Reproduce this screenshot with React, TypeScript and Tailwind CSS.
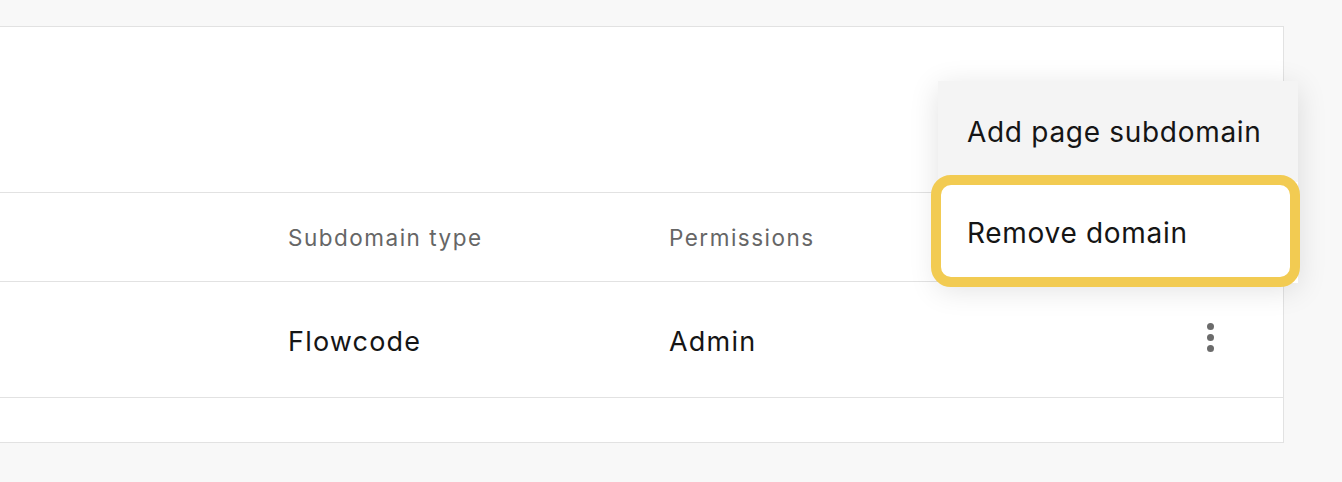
export default function App() {
  return (
    <div
      className="relative min-h-screen bg-[#f8f8f8] pt-[26px] pr-[58px] font-['Inter',sans-serif]"
      style={{ height: 482 }}
    >
      <div className="-ml-px border border-[#e2e2e2] bg-white">
        <div className="h-[166px] border-b border-[#e2e2e2]" />
        <div className="flex h-[89px] items-center border-b border-[#e2e2e2] pt-[2px] text-[22.5px] tracking-[1.5px] text-[#666]">
          <div className="w-[288px]" />
          <div className="w-[381px]">Subdomain type</div>
          <div>Permissions</div>
        </div>
        <div className="flex h-[116px] items-center border-b border-[#e2e2e2] pt-[6px] text-[27px] tracking-[1.2px] text-[#151515]">
          <div className="w-[288px]" />
          <div className="w-[381px]">Flowcode</div>
          <div className="flex-1">Admin</div>
          <div className="mr-[69px] -mt-[10px] flex flex-col gap-[4px]">
            <span className="block h-[7px] w-[7px] rounded-full bg-[#6b6b6b]" />
            <span className="block h-[7px] w-[7px] rounded-full bg-[#6b6b6b]" />
            <span className="block h-[7px] w-[7px] rounded-full bg-[#6b6b6b]" />
          </div>
        </div>
        <div className="h-[44px]" />
      </div>

      <div className="absolute top-[81px] left-[938px] w-[360px] bg-white shadow-[0_6px_28px_rgba(0,0,0,0.12)]">
        <div className="flex h-[101px] items-center bg-[#f4f4f4] pl-[29px] text-[28px] tracking-[0.7px] text-[#151515]">
          Add page subdomain
        </div>
        <div className="relative flex h-[101px] items-center pl-[29px] text-[28px] tracking-[0.7px] text-[#151515]">
          <div className="absolute -top-[7px] -right-[2px] -bottom-[4px] -left-[7px] rounded-[20px] border-[10px] border-[#f2cb52]" />
          <span className="relative">Remove domain</span>
        </div>
      </div>
    </div>
  );
}
